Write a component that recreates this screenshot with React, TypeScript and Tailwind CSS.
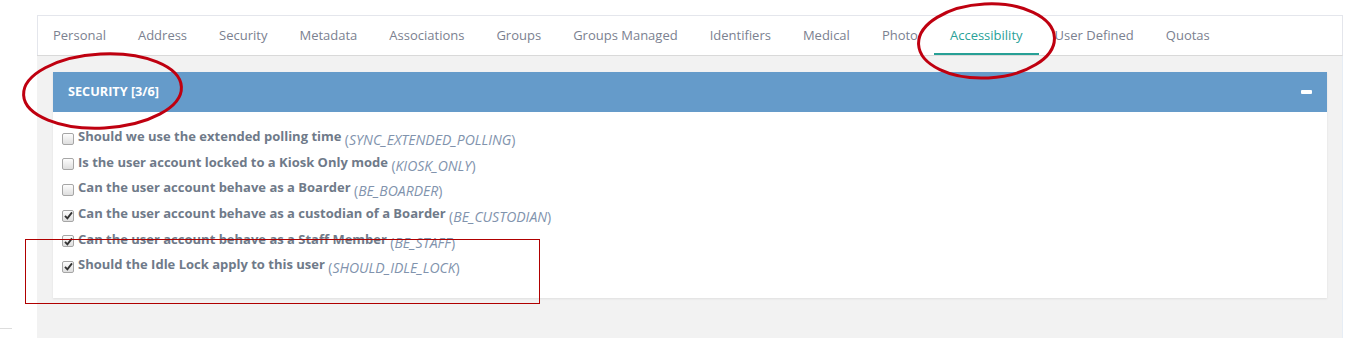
import React from "react";

const tabs = [
  "Personal",
  "Address",
  "Security",
  "Metadata",
  "Associations",
  "Groups",
  "Groups Managed",
  "Identifiers",
  "Medical",
  "Photo",
  "Accessibility",
  "User Defined",
  "Quotas",
];

const rows: { label: string; code: string; checked: boolean }[] = [
  { label: "Should we use the extended polling time", code: "SYNC_EXTENDED_POLLING", checked: false },
  { label: "Is the user account locked to a Kiosk Only mode", code: "KIOSK_ONLY", checked: false },
  { label: "Can the user account behave as a Boarder", code: "BE_BOARDER", checked: false },
  { label: "Can the user account behave as a custodian of a Boarder", code: "BE_CUSTODIAN", checked: true },
  { label: "Can the user account behave as a Staff Member", code: "BE_STAFF", checked: true },
  { label: "Should the Idle Lock apply to this user", code: "SHOULD_IDLE_LOCK", checked: true },
];

function Checkbox({ checked }: { checked: boolean }) {
  return (
    <span className="flex h-[12px] w-[12px] shrink-0 items-center justify-center rounded-[2px] border border-[#a6a6a6] bg-gradient-to-b from-[#fdfdfd] to-[#dedede]">
      {checked && (
        <svg width="9" height="9" viewBox="0 0 9 9">
          <path d="M1 4.8 L3.4 7.3 L8 1.4" fill="none" stroke="#333" strokeWidth="1.9" />
        </svg>
      )}
    </span>
  );
}

export default function App() {
  return (
    <div
      className="relative h-[342px] w-[1356px] overflow-hidden bg-white"
      style={{ fontFamily: '"Open Sans", "Noto Sans", sans-serif' }}
    >
      <div className="ml-[37px] w-[1306px] pt-[15px]">
        {/* Tab bar */}
        <div className="flex h-[41px] border-t border-r border-b border-[#e4e6ec] border-b-[#d9d9d9] bg-white shadow-[inset_1px_0_0_#e4e6ec]">
          {tabs.map((t) => {
            const active = t === "Accessibility";
            return (
              <div
                key={t}
                className={
                  active
                    ? "flex h-full items-center border-b-2 border-[#27a096] px-[16px] pt-[2px] text-[13px] text-[#2aa198]"
                    : "flex h-full items-center px-[16px] text-[13px] text-[#7b8190]"
                }
              >
                {t}
              </div>
            );
          })}
        </div>
        {/* Gray content area */}
        <div className="h-[282px] border-r border-[#e6edf5] bg-[#f2f2f2] pl-[16px] pr-[15px] pt-[16px]">
          <div className="bg-white shadow-[0_1px_2px_rgba(0,0,0,0.08)]">
            <div className="flex h-[40px] items-center justify-between bg-[#659bca] pl-[15px] pr-[15px]">
              <span className="text-[12.7px] font-bold text-white">SECURITY [3/6]</span>
              <span className="h-[4px] w-[11px] rounded-[1px] bg-white" />
            </div>
            <div className="h-[186px] pt-[14px] pl-[9px]">
              {rows.map((r) => (
                <div key={r.code} className="flex h-[25.6px] items-center gap-[4px]">
                  <Checkbox checked={r.checked} />
                  <span className="whitespace-nowrap text-[13px] font-bold leading-none text-[#6f7a89]">
                    {r.label}{" "}
                    <span className="align-[-4px] text-[14px] font-normal text-[#8193ad]">
                      (<i>{r.code}</i>)
                    </span>
                  </span>
                </div>
              ))}
            </div>
          </div>
        </div>
      </div>

      {/* Annotation overlays */}
      <svg className="pointer-events-none absolute left-0 top-0" width="1356" height="342">
        <ellipse cx="102.5" cy="91" rx="79" ry="37" fill="none" stroke="#bf0010" strokeWidth="3" transform="rotate(-3 102 91)" />
        <ellipse cx="986.5" cy="41" rx="68" ry="37" fill="none" stroke="#bf0010" strokeWidth="3" transform="rotate(-3 986 41)" />
        <rect x="25.5" y="239.5" width="514" height="64" fill="none" stroke="#b00000" strokeWidth="1" />
        <line x1="0" y1="328.5" x2="12" y2="328.5" stroke="#dddddd" strokeWidth="1" />
      </svg>
    </div>
  );
}
